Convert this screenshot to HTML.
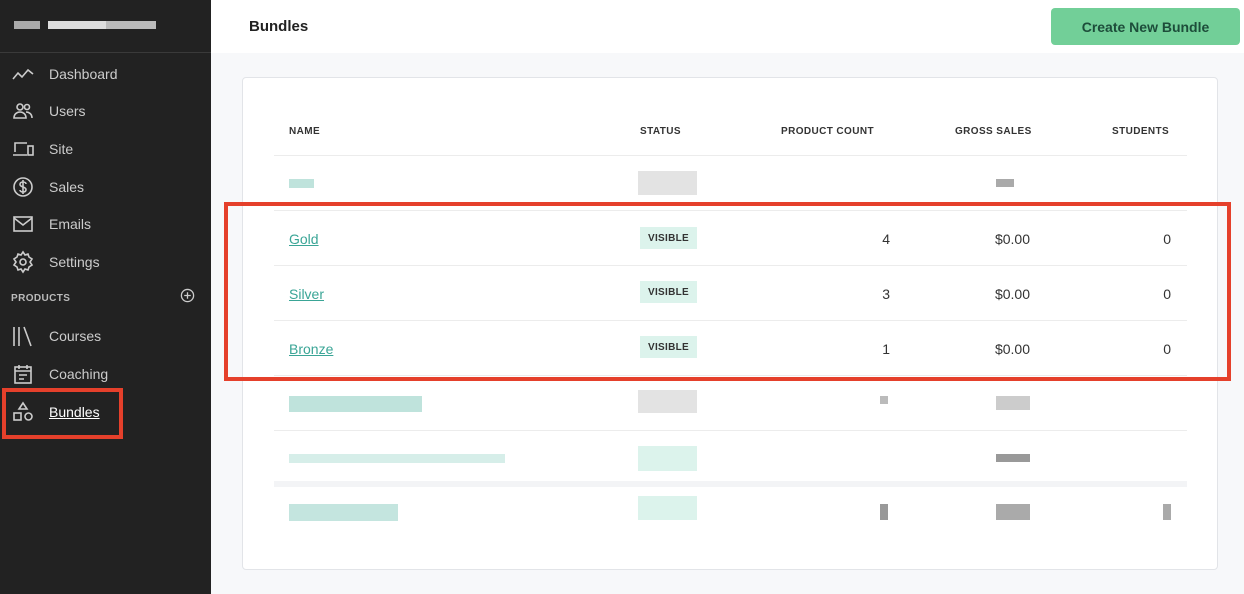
<!DOCTYPE html><html><head><style>
*{margin:0;padding:0;box-sizing:border-box}
body{width:1244px;height:594px;overflow:hidden;font-family:"Liberation Sans",sans-serif;background:#f7f8fa;position:relative}
.sb{position:absolute;left:0;top:0;width:211px;height:594px;background:#222}
.sb .logo{height:53px;border-bottom:1px solid #3a3a3a;position:relative}
.px{position:absolute;height:8px}
.nav{position:absolute;left:0;color:#ccc;font-size:14px;display:flex;align-items:center}
.nav svg{position:absolute;left:11px;width:24px;height:24px;top:-12px;fill:none;stroke:#ccc;stroke-width:1.6}
.nav span{position:absolute;left:49px;top:-8px;white-space:nowrap}
.top{position:absolute;left:211px;top:0;right:0;height:53px;background:#fff}
.card{position:absolute;left:242px;top:77px;width:976px;height:493px;background:#fff;border:1px solid #e2e4e8;border-radius:4px}
.th{position:absolute;top:126px;font-size:10px;font-weight:bold;color:#333;letter-spacing:.4px}
.hl{position:absolute;left:274px;width:913px;height:1px;background:#ececec}
.lnk{position:absolute;left:289px;color:#3aa596;text-decoration:underline;font-size:14px}
.badge{position:absolute;left:640px;width:57px;height:22px;background:#dcf3ec;font-size:10px;font-weight:bold;color:#333;text-align:center;line-height:23px;letter-spacing:.3px}
.num{position:absolute;font-size:14px;color:#333;text-align:right}
.blk{position:absolute}
</style></head><body>
<div class="sb"><div class="logo">
<div class="px" style="left:14px;top:21px;width:26px;background:#aaa"></div>
<div class="px" style="left:48px;top:21px;width:58px;background:#ddd"></div>
<div class="px" style="left:106px;top:21px;width:50px;background:#bbb"></div>
</div>
<div class="nav" style="top:74px"><svg viewBox="0 0 24 24"><path d="M2 17l5-6 4 4 6-7 5 4"/></svg><span>Dashboard</span></div>
<div class="nav" style="top:111px"><svg viewBox="0 0 24 24"><circle cx="9" cy="8" r="3"/><circle cx="16" cy="8" r="2.5"/><path d="M3 19c0-4 3-6 6-6s6 2 6 6zM15 13c3 0 6 2 6 6"/></svg><span>Users</span></div>
<div class="nav" style="top:149px"><svg viewBox="0 0 24 24"><path d="M4 15V6h12M2 18h14"/><rect x="17" y="9" width="5" height="9"/></svg><span>Site</span></div>
<div class="nav" style="top:187px"><svg viewBox="0 0 24 24"><circle cx="12" cy="12" r="9"/><path d="M15 9c0-1-1-2-3-2s-3 1-3 2.5 2 2 3 2.5 3 1 3 2.5-1 2.5-3 2.5-3-1-3-2M12 5v14"/></svg><span>Sales</span></div>
<div class="nav" style="top:224px"><svg viewBox="0 0 24 24"><rect x="3" y="5" width="18" height="14"/><path d="M3 6l9 7 9-7"/></svg><span>Emails</span></div>
<div class="nav" style="top:262px"><svg viewBox="0 0 24 24"><circle cx="12" cy="12" r="3"/><path d="M12 2l2 3 3-1 1 3 3 2-2 3 2 3-3 2-1 3-3-1-2 3-2-3-3 1-1-3-3-2 2-3-2-3 3-2 1-3 3 1z"/></svg><span>Settings</span></div>
<div style="position:absolute;left:11px;top:293px;font-size:10px;font-weight:bold;color:#bbb;letter-spacing:.4px">PRODUCTS</div>
<svg style="position:absolute;left:180px;top:288px" width="15" height="15" viewBox="0 0 16 16" fill="none" stroke="#ccc" stroke-width="1.4"><circle cx="8" cy="8" r="6.5"/><path d="M8 4.5v7M4.5 8h7"/></svg>
<div class="nav" style="top:336px"><svg viewBox="0 0 24 24"><path d="M3 3v19M8 3v19M13 3l7 19"/></svg><span>Courses</span></div>
<div class="nav" style="top:374px"><svg viewBox="0 0 24 24"><rect x="4" y="5" width="16" height="16"/><path d="M8 3v4M16 3v4M4 9h16M8 13h8M8 17h5"/></svg><span>Coaching</span></div>
<div style="position:absolute;left:2px;top:388px;width:121px;height:51px;border:4px solid #e5402b"></div>
<div class="nav" style="top:412px"><svg viewBox="0 0 24 24"><path d="M12 3l4 6H8z"/><rect x="3" y="13" width="7" height="7"/><circle cx="17.5" cy="16.5" r="3.5"/></svg><span style="color:#fff;text-decoration:underline">Bundles</span></div>
</div>
<div class="top"><div style="position:absolute;left:38px;top:18px;font-size:15px;font-weight:bold;color:#222">Bundles</div>
<div style="position:absolute;left:840px;top:8px;width:189px;height:37px;border-radius:4px;color:#1d4d3a;font-size:14px;font-weight:bold;text-align:center;line-height:38px;background:#72cf98">Create New Bundle</div></div>
<div class="card"></div>
<div class="th" style="left:289px">NAME</div><div class="th" style="left:640px">STATUS</div><div class="th" style="left:781px">PRODUCT COUNT</div><div class="th" style="left:955px">GROSS SALES</div><div class="th" style="left:1112px">STUDENTS</div>
<div class="hl" style="top:155px"></div><div class="hl" style="top:210px"></div><div class="hl" style="top:265px"></div><div class="hl" style="top:320px"></div><div class="hl" style="top:375px"></div><div class="hl" style="top:430px"></div><div class="hl" style="top:481px;height:6px;background:#f3f4f6"></div>
<div class="blk" style="left:289px;top:179px;width:25px;height:9px;background:#bfe3dc"></div>
<div class="blk" style="left:638px;top:171px;width:59px;height:24px;background:#e3e3e3"></div>
<div class="blk" style="left:996px;top:179px;width:18px;height:8px;background:#aaa"></div>
<a class="lnk" style="top:231px">Gold</a><a class="lnk" style="top:286px">Silver</a><a class="lnk" style="top:341px">Bronze</a>
<div class="badge" style="top:227px">VISIBLE</div><div class="badge" style="top:281px">VISIBLE</div><div class="badge" style="top:336px">VISIBLE</div>
<div class="num" style="left:850px;width:40px;top:231px">4</div><div class="num" style="left:850px;width:40px;top:286px">3</div><div class="num" style="left:850px;width:40px;top:341px">1</div>
<div class="num" style="left:950px;width:80px;top:231px">$0.00</div><div class="num" style="left:950px;width:80px;top:286px">$0.00</div><div class="num" style="left:950px;width:80px;top:341px">$0.00</div>
<div class="num" style="left:1130px;width:41px;top:231px">0</div><div class="num" style="left:1130px;width:41px;top:286px">0</div><div class="num" style="left:1130px;width:41px;top:341px">0</div>
<div class="blk" style="left:289px;top:396px;width:133px;height:16px;background:#bfe3dc"></div>
<div class="blk" style="left:638px;top:390px;width:59px;height:23px;background:#e3e3e3"></div>
<div class="blk" style="left:880px;top:396px;width:8px;height:8px;background:#bbb"></div>
<div class="blk" style="left:996px;top:396px;width:34px;height:14px;background:#ccc"></div>
<div class="blk" style="left:289px;top:454px;width:216px;height:9px;background:#d6eee9"></div>
<div class="blk" style="left:638px;top:446px;width:59px;height:25px;background:#dcf3ec"></div>
<div class="blk" style="left:996px;top:454px;width:34px;height:8px;background:#999"></div>
<div class="blk" style="left:289px;top:504px;width:109px;height:17px;background:#c4e5df"></div>
<div class="blk" style="left:638px;top:496px;width:59px;height:24px;background:#dcf3ec"></div>
<div class="blk" style="left:880px;top:504px;width:8px;height:16px;background:#999"></div>
<div class="blk" style="left:996px;top:504px;width:34px;height:16px;background:#aaa"></div>
<div class="blk" style="left:1163px;top:504px;width:8px;height:16px;background:#aaa"></div>
<div style="position:absolute;left:224px;top:202px;width:1007px;height:179px;border:4px solid #e5402b"></div>
</body></html>
